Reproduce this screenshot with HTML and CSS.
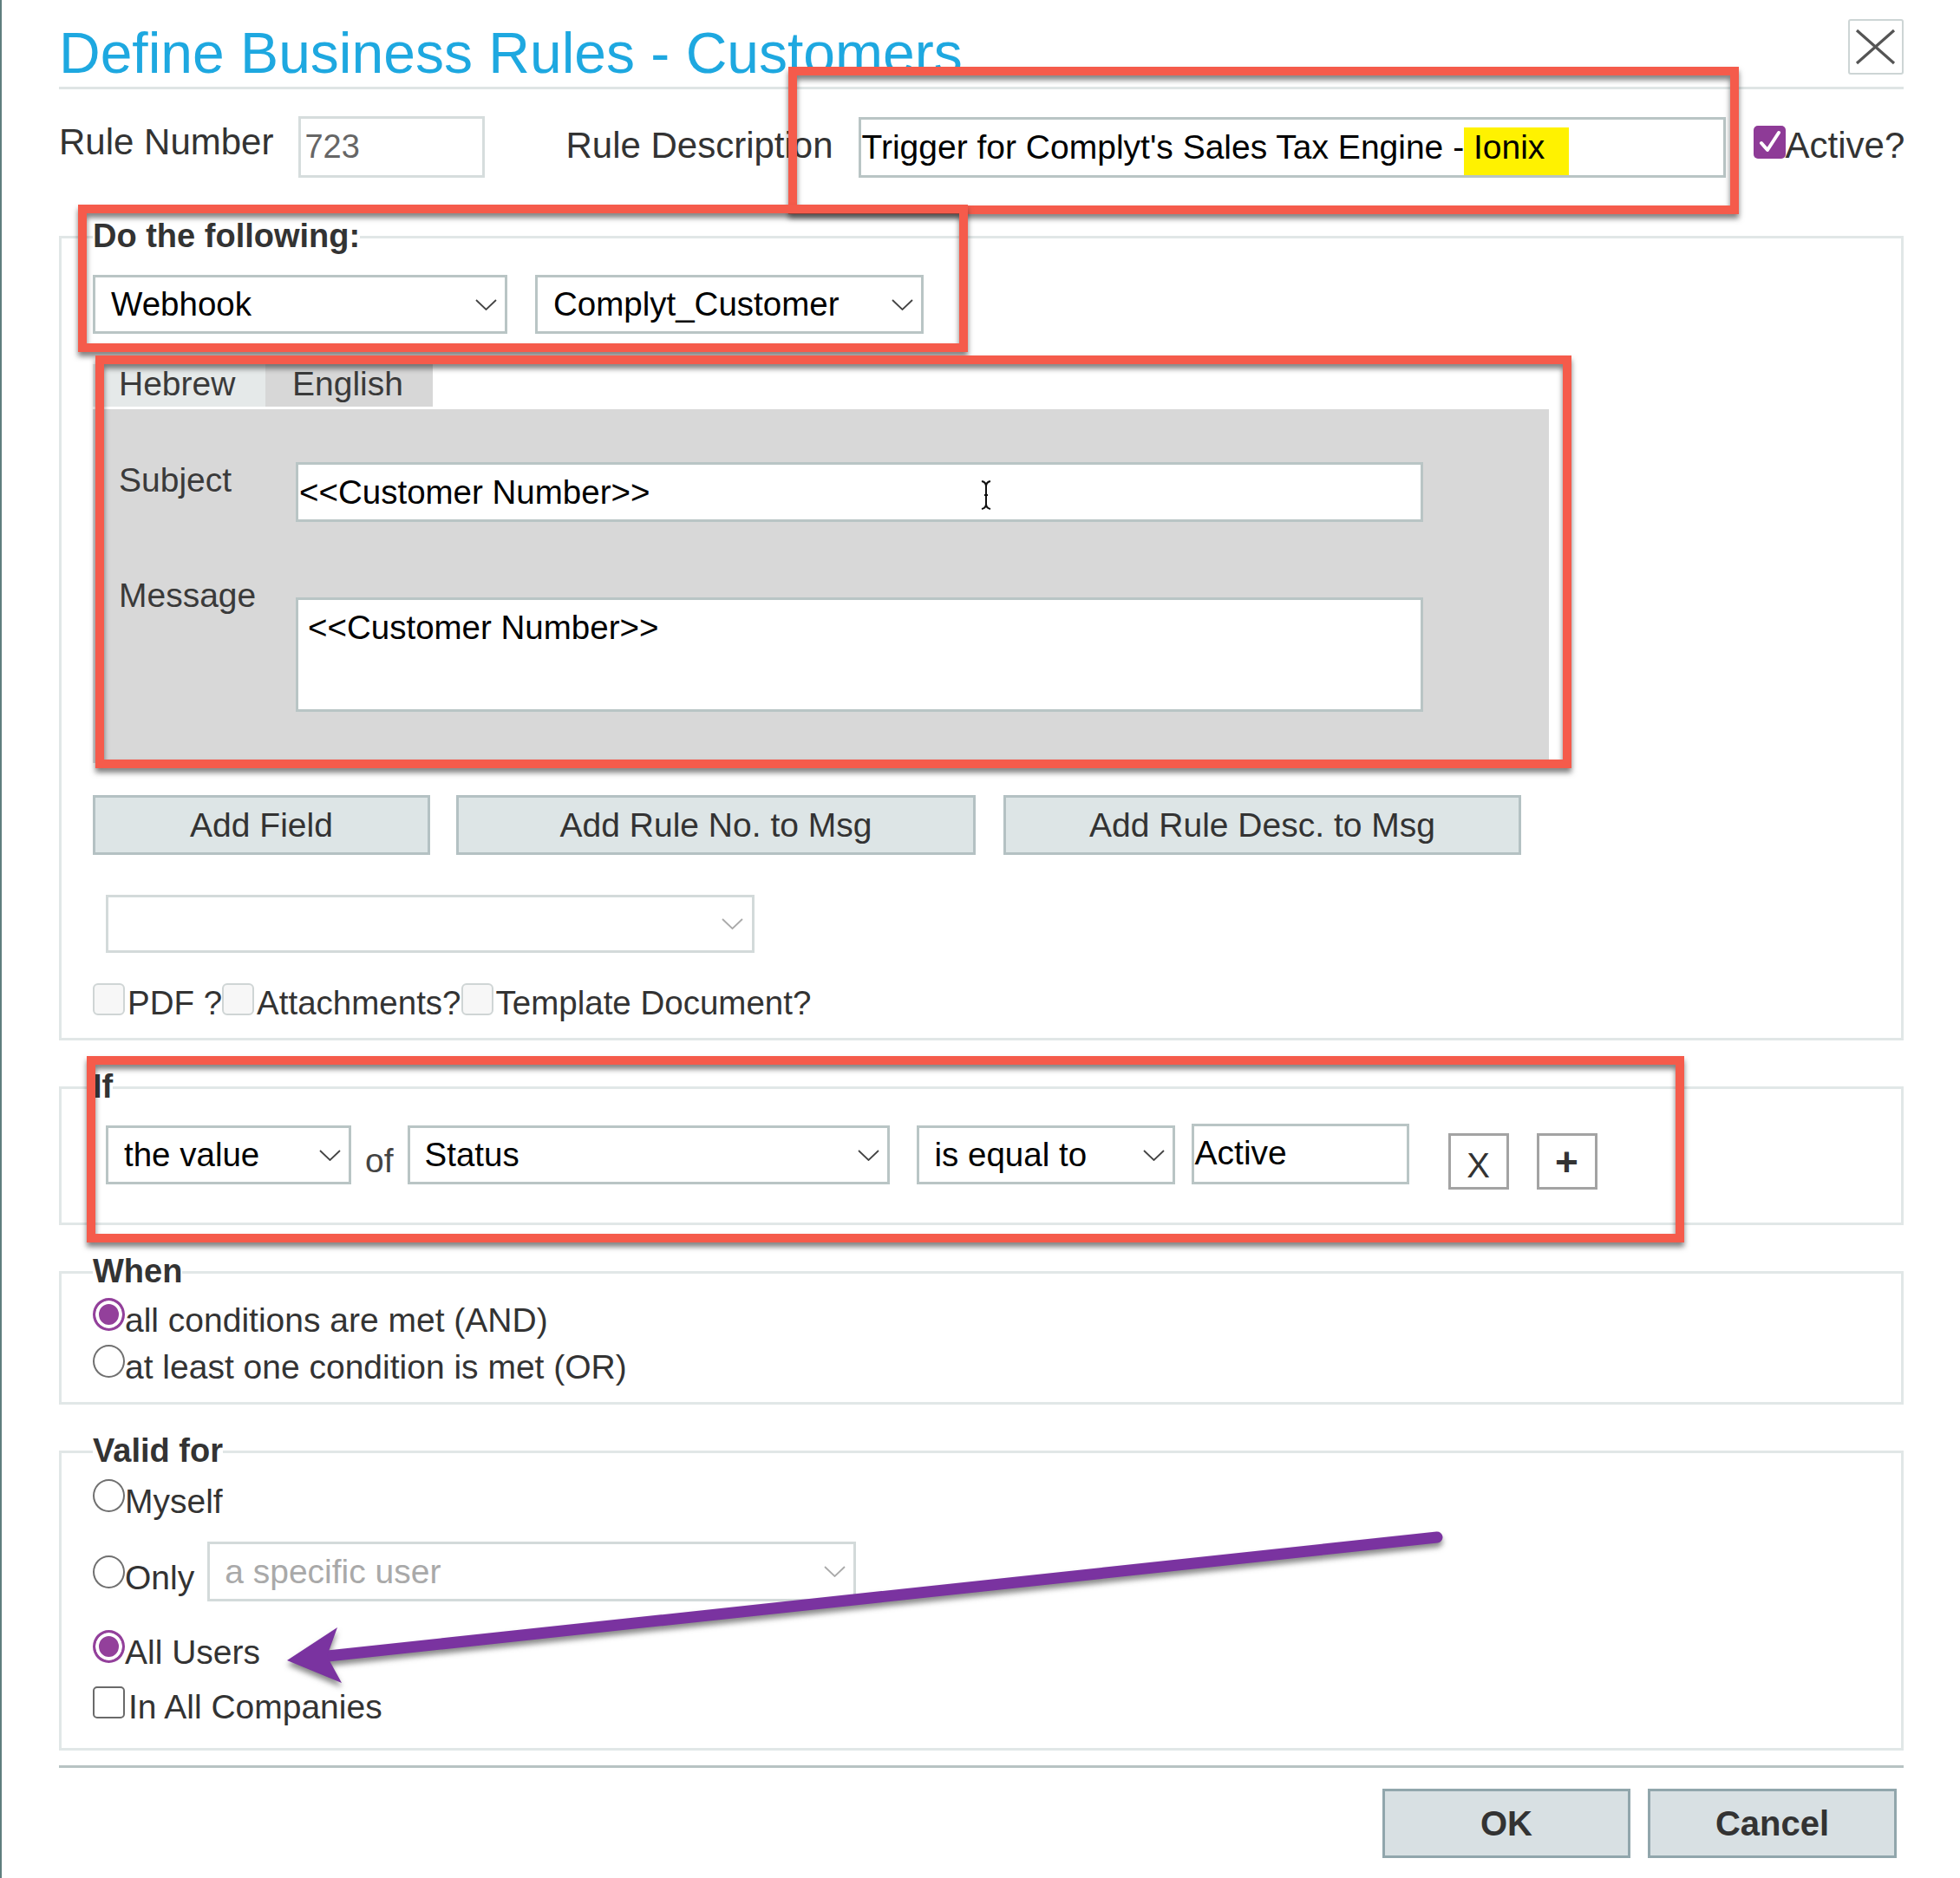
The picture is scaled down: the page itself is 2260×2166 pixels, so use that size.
FILE: index.html
```html
<!DOCTYPE html>
<html lang="en">
<head>
<meta charset="utf-8">
<title>Define Business Rules - Customers</title>
<link rel="stylesheet" href="styles.css">
</head>
<body>
<div class="page">
  <header class="header">
    <h1 class="title">Define Business Rules - Customers</h1>
    <div class="close">
      <svg viewBox="0 0 60 60" width="60" height="60"><path d="M8 11 L51 49 M51 11 L8 49" stroke="#555" stroke-width="3.2" fill="none"/></svg>
    </div>
  </header>

  <div class="rule-row">
    <span class="lbl-lg lbl-num">Rule Number</span>
    <div class="inp inp-num">723</div>
    <span class="lbl-lg lbl-desc">Rule Description</span>
    <div class="inp inp-desc">Trigger for Complyt's Sales Tax Engine -<span class="hl"> Ionix</span></div>
    <span class="chk-on"><svg viewBox="0 0 37 38" width="37" height="38"><path d="M9 20 L16 28 L29 8" stroke="#fff" stroke-width="4" fill="none" stroke-linecap="round" stroke-linejoin="round"/></svg></span>
    <span class="lbl-lg lbl-active">Active?</span>
  </div>

  <fieldset class="fs fs-do">
    <legend>Do the following:</legend>
    <div class="row">
      <div class="sel sel-webhook"><span>Webhook</span><svg viewBox="0 0 25 13"><polyline points="1,1 12.5,12 24,1" fill="none" stroke="#444" stroke-width="1.8"/></svg></div>
      <div class="sel sel-complyt"><span>Complyt_Customer</span><svg viewBox="0 0 25 13"><polyline points="1,1 12.5,12 24,1" fill="none" stroke="#444" stroke-width="1.8"/></svg></div>
    </div>
    <div class="tabs">
      <div class="tab tab-he">Hebrew</div>
      <div class="tab tab-en">English</div>
    </div>
    <div class="panel">
      <div class="prow">
        <div class="plabel subj-label">Subject</div>
        <div class="pinput subj">&lt;&lt;Customer Number&gt;&gt;</div>
      </div>
      <div class="prow msg-row">
        <div class="plabel">Message</div>
        <div class="pinput msg">&lt;&lt;Customer Number&gt;&gt;</div>
      </div>
    </div>
    <div class="btns">
      <div class="btn btn-field">Add Field</div>
      <div class="btn btn-no">Add Rule No. to Msg</div>
      <div class="btn btn-desc">Add Rule Desc. to Msg</div>
    </div>
    <div class="sel sel-empty"><svg viewBox="0 0 25 13"><polyline points="1,1 12.5,12 24,1" fill="none" stroke="#aaa" stroke-width="1.8"/></svg></div>
    <div class="cbrow">
      <span class="cb"></span><span>PDF ?</span>
      <span class="cb"></span><span>Attachments?</span>
      <span class="cb"></span><span>Template Document?</span>
    </div>
  </fieldset>

  <fieldset class="fs fs-if">
    <legend>If</legend>
    <div class="if-row">
      <div class="sel sel-val"><span>the value</span><svg viewBox="0 0 25 13"><polyline points="1,1 12.5,12 24,1" fill="none" stroke="#444" stroke-width="1.8"/></svg></div>
      <span class="of">of</span>
      <div class="sel sel-status"><span>Status</span><svg viewBox="0 0 25 13"><polyline points="1,1 12.5,12 24,1" fill="none" stroke="#444" stroke-width="1.8"/></svg></div>
      <div class="sel sel-op"><span>is equal to</span><svg viewBox="0 0 25 13"><polyline points="1,1 12.5,12 24,1" fill="none" stroke="#444" stroke-width="1.8"/></svg></div>
      <div class="inp-active">Active</div>
      <div class="sq sq-x">X</div>
      <div class="sq sq-plus">+</div>
    </div>
  </fieldset>

  <fieldset class="fs fs-when">
    <legend>When</legend>
    <div class="opt"><span class="radio on"></span><span>all conditions are met (AND)</span></div>
    <div class="opt opt-2"><span class="radio"></span><span>at least one condition is met (OR)</span></div>
  </fieldset>

  <fieldset class="fs fs-valid">
    <legend>Valid for</legend>
    <div class="opt"><span class="radio"></span><span>Myself</span></div>
    <div class="opt opt-only">
      <span class="radio radio-only"></span><span class="only-text">Only</span>
      <div class="sel sel-user"><span>a specific user</span><svg viewBox="0 0 25 13"><polyline points="1,1 12.5,12 24,1" fill="none" stroke="#aaa" stroke-width="1.8"/></svg></div>
    </div>
    <div class="opt opt-all"><span class="radio on"></span><span>All Users</span></div>
    <div class="opt opt-comp"><span class="cb cb-dark"></span><span>In All Companies</span></div>
  </fieldset>

  <footer class="footer">
    <div class="fbtn fbtn-ok">OK</div>
    <div class="fbtn fbtn-cancel">Cancel</div>
  </footer>

  <div class="mark m1"></div>
  <div class="mark m2"></div>
  <div class="mark m3"></div>
  <div class="mark m4"></div>

  <svg class="ibeam" viewBox="0 0 16 36" width="16" height="36"><path d="M3 2 Q8 3 8 8 Q8 3 13 2 M8 8 V28 M3 34 Q8 33 8 28 Q8 33 13 34 M6 18 H10" stroke="#111" stroke-width="2" fill="none"/></svg>

  <svg class="arrow" viewBox="0 0 1400 230" width="1400" height="230">
    <line x1="1357" y1="33" x2="78" y2="170" stroke="#7a33a0" stroke-width="13" stroke-linecap="round"/>
    <polygon points="31,175 89,137 77,170 94,201" fill="#7a33a0"/>
  </svg>
</div>
</body>
</html>
```

FILE: styles.css
```css
html, body {
  margin: 0;
  padding: 0;
  background: #fff;
}

body {
  font-family: "Liberation Sans", Arial, Helvetica, sans-serif;
  color: #333;
}

.page {
  position: relative;
  width: 2260px;
  height: 2166px;
  box-sizing: border-box;
  padding: 0 65px 0 68px;
  box-shadow: inset 2px 0 0 #5f7e7e;
  overflow: hidden;
  background: #fff;
}

/* header */
.header {
  display: flex;
  justify-content: space-between;
  align-items: flex-start;
  height: 78px;
  padding-top: 22px;
  border-bottom: 3px solid #dfe5e5;
}

.title {
  margin: 7px 0 0;
  font-size: 66px;
  line-height: 64px;
  font-weight: 400;
  color: #1ea8e0;
  white-space: nowrap;
}

.close {
  width: 64px;
  height: 64px;
  box-sizing: border-box;
  border: 2px solid #cdd5d5;
  border-radius: 3px;
}

.close svg {
  display: block;
}

/* rule row */
.rule-row {
  display: flex;
  align-items: flex-start;
  margin-top: 31px;
}

.rule-row > * {
  flex-shrink: 0;
}

.lbl-lg {
  font-size: 42px;
  line-height: 48px;
  color: #333;
  white-space: nowrap;
}

.lbl-num {
  margin-top: 6px;
}

.inp {
  box-sizing: border-box;
  border: 3px solid #b9c5c5;
  background: #fff;
  color: #000;
  font-size: 38px;
  white-space: nowrap;
}

.inp-num {
  margin-left: 29px;
  width: 215px;
  height: 71px;
  border-color: #d6dddd;
  color: #666;
  line-height: 65px;
  padding-left: 4px;
}

.lbl-desc {
  margin-left: 93px;
  margin-top: 10px;
}

.inp-desc {
  margin-left: 29px;
  margin-top: 1px;
  width: 1000px;
  height: 70px;
  font-size: 39px;
  line-height: 64px;
  padding-left: 1px;
}

.hl {
  background: #fff200;
  padding: 1px 28px 11px 0;
}

.chk-on {
  display: block;
  margin-left: 32px;
  margin-top: 11px;
  width: 37px;
  height: 38px;
  background: #8e3b97;
  border-radius: 5px;
}

.chk-on svg {
  display: block;
}

.lbl-active {
  margin-top: 10px;
}

/* fieldsets */
.fs {
  margin: 33px 0 0;
  border: 3px solid #e1e7e7;
  padding: 22px 30px 20px 36px;
  min-width: 0;
}

.fs legend {
  padding: 0 0 3px;
  font-size: 38px;
  line-height: 40px;
  font-weight: 700;
  color: #333;
}

.fs-do {
  margin-top: 47px;
}

.row {
  display: flex;
  align-items: flex-start;
}

.sel {
  box-sizing: border-box;
  height: 68px;
  border: 3px solid #b9c5c5;
  background: #fff;
  display: flex;
  align-items: center;
  justify-content: space-between;
  font-size: 38.5px;
  color: #000;
  padding: 0 9px 0 18px;
  white-space: nowrap;
  flex-shrink: 0;
}

.sel svg {
  width: 25px;
  height: 13px;
  flex-shrink: 0;
}

.sel-webhook {
  width: 478px;
}

.sel-complyt {
  width: 448px;
  margin-left: 32px;
}

.tabs {
  display: flex;
  margin-top: 35px;
}

.tab {
  height: 49px;
  line-height: 45px;
  font-size: 39px;
  color: #3a3a3a;
  box-sizing: border-box;
}

.tab-he {
  width: 199px;
  padding-left: 30px;
  background: #e5e9e9;
}

.tab-en {
  width: 193px;
  padding-left: 31px;
  background: #d7d7d7;
}

.panel {
  margin-top: 3px;
  width: 1679px;
  box-sizing: border-box;
  background: #d8d8d8;
  padding: 61px 0 59px 30px;
}

.prow {
  display: flex;
  align-items: flex-start;
}

.plabel {
  width: 204px;
  flex-shrink: 0;
  font-size: 39px;
  line-height: 45px;
  color: #3a3a3a;
}

.subj-label {
  margin-top: -2px;
}

.pinput {
  width: 1300px;
  box-sizing: border-box;
  border: 3px solid #b9c5c5;
  background: #fff;
  font-size: 38.5px;
  color: #000;
  white-space: nowrap;
}

.subj {
  height: 69px;
  line-height: 63px;
  padding-left: 1px;
}

.msg-row {
  margin-top: 62px;
}

.msg {
  height: 132px;
  margin-top: 25px;
  line-height: 45px;
  padding: 9px 11px;
}

.btns {
  display: flex;
  margin-top: 37px;
}

.btn {
  height: 69px;
  box-sizing: border-box;
  border: 3px solid #b4c1c3;
  background: #dde5e6;
  font-size: 39px;
  color: #333;
  display: flex;
  align-items: center;
  justify-content: center;
  white-space: nowrap;
}

.btn-field {
  width: 389px;
}

.btn-no {
  width: 599px;
  margin-left: 30px;
}

.btn-desc {
  width: 597px;
  margin-left: 32px;
}

.sel-empty {
  margin: 46px 0 0 15px;
  width: 748px;
  height: 67px;
  border-color: #d3dada;
  justify-content: flex-end;
  padding-right: 10px;
}

.cbrow {
  display: flex;
  align-items: flex-start;
  margin-top: 35px;
  font-size: 38.5px;
  line-height: 45px;
  color: #333;
  white-space: nowrap;
}

.fs-do {
  padding-bottom: 18px;
}

.cb {
  display: block;
  width: 37px;
  height: 37px;
  box-sizing: border-box;
  border: 2px solid #cfd5d5;
  border-radius: 6px;
  background: #f7f7f7;
  margin-right: 3px;
  flex-shrink: 0;
}

/* if */
.if-row {
  display: flex;
  align-items: flex-start;
}

.if-row > * {
  flex-shrink: 0;
}

.fs-if {
  padding-bottom: 38px;
}

.sel-val {
  margin-left: 15px;
  width: 283px;
}

.of {
  margin: 18px 0 0 16px;
  font-size: 39px;
  line-height: 45px;
  color: #444;
}

.sel-status {
  margin-left: 16px;
  width: 556px;
  padding-left: 17px;
}

.sel-op {
  margin-left: 31px;
  width: 298px;
}

.inp-active {
  margin: -2px 0 0 19px;
  width: 251px;
  height: 70px;
  box-sizing: border-box;
  border: 3px solid #b9c5c5;
  background: #fff;
  color: #000;
  font-size: 39px;
  line-height: 45px;
  padding: 8px 0 0 1px;
}

.sq {
  margin-top: 9px;
  width: 70px;
  height: 65px;
  box-sizing: border-box;
  border: 3px solid #a3a3a3;
  display: flex;
  justify-content: center;
  align-items: center;
  color: #333;
}

.sq-x {
  margin-left: 45px;
  font-size: 40px;
  padding-top: 10px;
}

.sq-plus {
  margin-left: 32px;
  font-size: 46px;
  font-weight: 700;
  padding-top: 0;
}

/* options */
.opt {
  display: flex;
  align-items: flex-start;
  font-size: 39px;
  line-height: 45px;
  color: #333;
  white-space: nowrap;
}

.radio {
  display: block;
  width: 37px;
  height: 38px;
  box-sizing: border-box;
  border-radius: 50%;
  border: 2.5px solid #707070;
  background: #fff;
  margin-top: -3px;
  flex-shrink: 0;
}

.radio.on {
  border: 3px solid #93409b;
  background: #93409b;
  box-shadow: inset 0 0 0 4px #fff;
}

.fs-when {
  padding-top: 11px;
  padding-bottom: 18px;
}

.opt-2 {
  margin-top: 9px;
}

.fs-valid {
  padding-top: 13px;
  padding-bottom: 25px;
}

.opt-only {
  margin-top: 24px;
}

.radio-only {
  margin-top: 16px;
}

.only-text {
  margin-top: 19px;
}

.sel-user {
  margin-left: 15px;
  width: 748px;
  height: 69px;
  border-color: #d3dada;
  color: #a9a9a9;
  font-size: 39px;
  padding-left: 17px;
}

.opt-all {
  margin-top: 36px;
}

.opt-comp {
  margin-top: 18px;
}

.cb-dark {
  border: 2.5px solid #6a6a6a;
  border-radius: 5px;
  background: #fff;
  margin-top: -1px;
  margin-right: 4px;
}

/* footer */
.footer {
  margin-top: 17px;
  border-top: 3px solid #b7c3c3;
  padding: 24px 8px 0 0;
  display: flex;
  justify-content: flex-end;
  gap: 20px;
}

.fbtn {
  height: 80px;
  box-sizing: border-box;
  border: 3px solid #91a6ac;
  background: #d8e0e3;
  font-size: 40px;
  font-weight: 700;
  color: #333;
  display: flex;
  align-items: center;
  justify-content: center;
}

.fbtn-ok {
  width: 286px;
}

.fbtn-cancel {
  width: 287px;
}

/* annotation overlays */
.mark {
  position: absolute;
  box-sizing: border-box;
  border: 10px solid #f55b4b;
  filter: drop-shadow(0 5px 3px rgba(40, 40, 40, 0.6));
  pointer-events: none;
}

.m1 {
  left: 909px;
  top: 77px;
  width: 1096px;
  height: 170px;
}

.m2 {
  left: 90px;
  top: 236px;
  width: 1026px;
  height: 170px;
}

.m3 {
  left: 110px;
  top: 410px;
  width: 1702px;
  height: 476px;
}

.m4 {
  left: 100px;
  top: 1218px;
  width: 1842px;
  height: 215px;
}

.ibeam {
  position: absolute;
  left: 1129px;
  top: 553px;
}

.arrow {
  position: absolute;
  left: 300px;
  top: 1740px;
  overflow: visible;
  filter: drop-shadow(0 5px 3px rgba(40, 40, 40, 0.55));
}
```
